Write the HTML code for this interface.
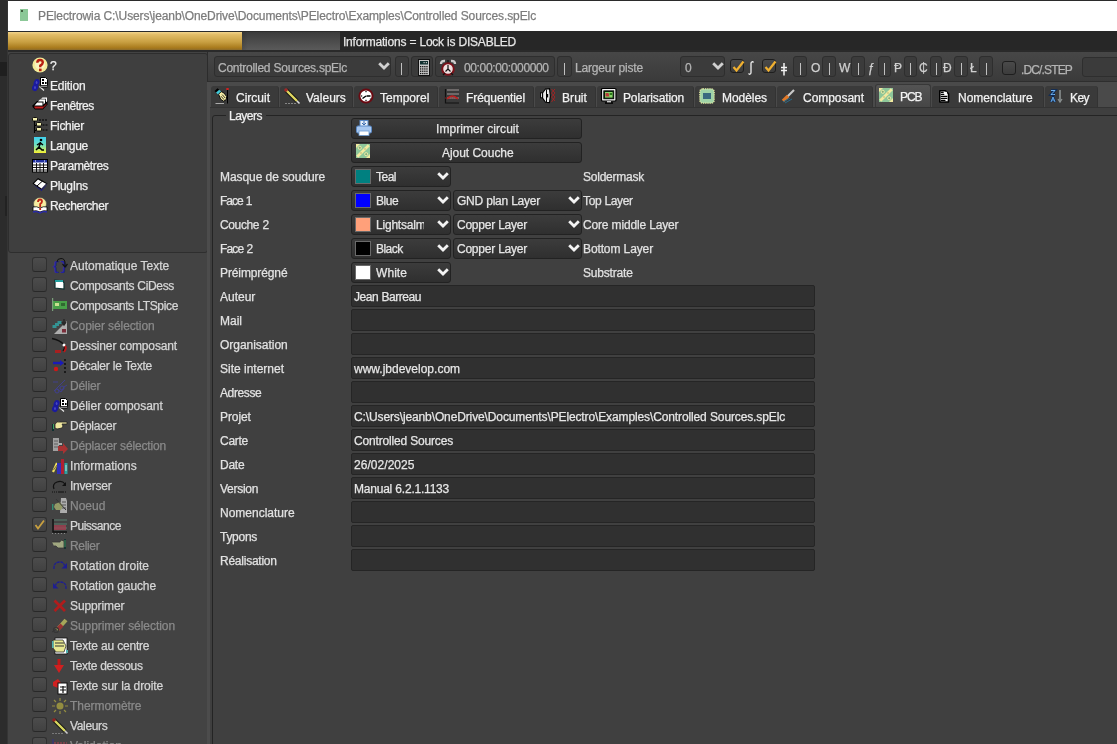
<!DOCTYPE html><html><head><meta charset="utf-8"><style>
html,body{margin:0;padding:0}
body{width:1117px;height:744px;position:relative;overflow:hidden;background:#404040;font-family:"Liberation Sans",sans-serif;font-size:12px}
div{-webkit-text-stroke:0.25px currentColor}
.t{will-change:transform}
svg{overflow:visible}
</style></head><body>
<div style="position:absolute;left:0px;top:0px;width:8px;height:744px;background:#2c2c2c"></div>
<div style="position:absolute;left:7px;top:0px;width:1px;height:744px;background:#353535"></div>
<div style="position:absolute;left:0px;top:62px;width:7px;height:14px;background:#1f1f1f"></div>
<div style="position:absolute;left:5px;top:196px;width:2px;height:20px;background:#222"></div>
<div style="position:absolute;left:8px;top:0px;width:1109px;height:1px;background:#2b2b2b"></div>
<div style="position:absolute;left:8px;top:1px;width:1109px;height:30px;background:#ffffff"></div>
<div style="position:absolute;left:8px;top:31px;width:1109px;height:1px;background:#2b2b2b"></div>
<div style="position:absolute;left:20px;top:9px;width:8px;height:12px;background:#8cc898"></div>
<div style="position:absolute;left:21px;top:10px;width:2px;height:2px;background:#406040"></div>
<div class="t" style="position:absolute;left:38px;top:9px;line-height:14px;font-size:12px;color:#7c7c7c;white-space:nowrap;letter-spacing:-0.102px;word-spacing:0.071px;">PElectrowia C:\Users\jeanb\OneDrive\Documents\PElectro\Examples\Controlled Sources.spElc</div>
<div style="position:absolute;left:8px;top:32px;width:234px;height:18px;background:linear-gradient(#f2d48c 0%,#e2bc66 15%,#c9a042 55%,#a87a1c 88%,#8c6c2a 100%)"></div>
<div style="position:absolute;left:242px;top:32px;width:98px;height:19px;background:linear-gradient(90deg,rgba(0,0,0,.12),rgba(0,0,0,0) 6px),linear-gradient(#3c3c3c,#5c5c5c)"></div>
<div style="position:absolute;left:340px;top:31px;width:777px;height:20px;background:#272727"></div>
<div class="t" style="position:absolute;left:343px;top:35px;line-height:14px;font-size:12px;color:#e6e6e6;white-space:nowrap;letter-spacing:-0.238px;word-spacing:0.166px;">Informations = Lock is DISABLED</div>
<div style="position:absolute;left:8px;top:50px;width:1109px;height:2px;background:#2a2a2a"></div>
<div style="position:absolute;left:208px;top:52px;width:909px;height:30px;background:linear-gradient(#474747,#3a3a3a)"></div>
<div style="position:absolute;left:8px;top:52px;width:200px;height:692px;background:#434343"></div>
<div style="position:absolute;left:8px;top:53px;width:198px;height:198px;border:1px solid #2e2e2e;border-radius:3px;background:#3f3f3f"></div>
<svg style="position:absolute;left:32px;top:57px;" width="16" height="17" viewBox="0 0 16 17"><circle cx="8" cy="8" r="7.6" fill="#f4eb98"/><circle cx="8" cy="7.5" r="5" fill="#faf4c0"/><path d="M5.3 5.8 Q5.3 3 8 3 Q10.8 3 10.8 5.6 Q10.8 7.2 8.3 8.6 L8.3 10.2" stroke="#b82010" stroke-width="2.4" fill="none"/><rect x="7" y="11.6" width="2.6" height="2.6" fill="#b82010"/></svg>
<div class="t" style="position:absolute;left:50px;top:59px;line-height:14px;font-size:12px;color:#f0f0f0;white-space:nowrap;">?</div>
<svg style="position:absolute;left:32px;top:77px;" width="16" height="17" viewBox="0 0 16 17"><ellipse cx="4.6" cy="5.6" rx="2.8" ry="3.6" transform="rotate(25 4.6 5.6)" fill="#1a1aa0"/><ellipse cx="3.2" cy="10.6" rx="3" ry="3.6" transform="rotate(25 3.2 10.6)" fill="#1a1aa0"/><ellipse cx="4.6" cy="5.4" rx="0.9" ry="1.5" fill="#4848c0"/><ellipse cx="3" cy="10.4" rx="0.9" ry="1.5" fill="#4848c0"/><path d="M8.5 0.5 H13.5 L15.5 2.5 V8.5 H8.5 Z" fill="#fff" stroke="#000" stroke-width="1"/><rect x="10" y="2" width="2" height="2" fill="#000"/><rect x="10" y="5" width="2" height="2" fill="#000"/><rect x="13" y="5" width="1.6" height="2" fill="#000"/><path d="M7.5 9.5 L12 13.5" stroke="#eee" stroke-width="1.2"/><path d="M8.5 10 H15.5" stroke="#000" stroke-width="1"/><path d="M9 9.2 H15" stroke="#ddd" stroke-width="0.8"/></svg>
<div class="t" style="position:absolute;left:50px;top:79px;line-height:14px;font-size:12px;color:#f0f0f0;white-space:nowrap;letter-spacing:-0.184px;">Edition</div>
<svg style="position:absolute;left:32px;top:97px;" width="16" height="17" viewBox="0 0 16 17"><path d="M0.5 8.5 L5 4 L15.5 4 L15.5 7.5 L11 12.5 L3 12.5 L0.5 10 Z" fill="#000"/><path d="M2 9.5 L11 9.5 L11 11.5 L3 11.5 Z" fill="#c42020"/><path d="M11 9.5 L14.5 6.5 L14.5 8 L11 11.5 Z" fill="#7a1010"/><path d="M2.5 8.5 L5.2 5.5 L10.5 5.5 L10.5 8.5 Z" fill="#fff"/><path d="M6 4.5 L8 2.5 L13 2.5 L13 6 L11.5 7.5 L11.5 4.5 Z" fill="#fff"/><path d="M9 1.8 L10.5 0.5 L15 0.5 L15 4.5 L14 5.2 L14 1.8 Z" fill="#fff"/></svg>
<div class="t" style="position:absolute;left:50px;top:99px;line-height:14px;font-size:12px;color:#f0f0f0;white-space:nowrap;letter-spacing:-0.430px;">Fenêtres</div>
<svg style="position:absolute;left:32px;top:117px;" width="16" height="17" viewBox="0 0 16 17"><path d="M2.5 3 V16 M2.5 8.5 H5 M2.5 13.5 H5" stroke="#000" stroke-width="1.1"/><rect x="0.5" y="0.5" width="5" height="3.5" rx="1" fill="#f4f0b0" stroke="#000" stroke-width="0.9"/><rect x="4.5" y="5.5" width="5" height="3.5" rx="1" fill="#f4f0b0" stroke="#000" stroke-width="0.9"/><rect x="4.5" y="10.5" width="5" height="3.5" rx="1" fill="#f4f0b0" stroke="#000" stroke-width="0.9"/><path d="M7 3 H15 M10.5 8 H15.5 M10.5 13 H15.5" stroke="#000" stroke-width="1" stroke-dasharray="2 1"/></svg>
<div class="t" style="position:absolute;left:50px;top:119px;line-height:14px;font-size:12px;color:#f0f0f0;white-space:nowrap;letter-spacing:-0.302px;">Fichier</div>
<svg style="position:absolute;left:32px;top:137px;" width="16" height="17" viewBox="0 0 16 17"><defs><linearGradient id="lg" x1="0" y1="0" x2="0" y2="1"><stop offset="0" stop-color="#40d0f0"/><stop offset="0.5" stop-color="#70e0c0"/><stop offset="1" stop-color="#f8f030"/></linearGradient></defs><rect x="2" y="0" width="12" height="16" fill="url(#lg)"/><circle cx="9" cy="3" r="1.3" fill="#000"/><path d="M8.5 5 L7 10 L4 13 M7 10 L10 13 L12 13 M8.5 6 L11 8 M8 6 L5 8" stroke="#000" stroke-width="1.5" fill="none"/></svg>
<div class="t" style="position:absolute;left:50px;top:139px;line-height:14px;font-size:12px;color:#f0f0f0;white-space:nowrap;letter-spacing:-0.389px;">Langue</div>
<svg style="position:absolute;left:32px;top:159px;" width="16" height="17" viewBox="0 0 16 17"><rect x="0.5" y="0.5" width="15" height="12.5" fill="#fff" stroke="#000"/><rect x="1" y="1" width="14" height="2.5" fill="#2030a0"/><rect x="3" y="1.5" width="1" height="1" fill="#fff"/><rect x="12" y="1.5" width="1" height="1" fill="#fff"/><path d="M1 6 H15 M1 8.5 H15 M1 11 H15 M4.5 4 V13 M8 4 V13 M11.5 4 V13" stroke="#000" stroke-width="0.9"/></svg>
<div class="t" style="position:absolute;left:50px;top:159px;line-height:14px;font-size:12px;color:#f0f0f0;white-space:nowrap;letter-spacing:-0.362px;">Paramètres</div>
<svg style="position:absolute;left:32px;top:177px;" width="16" height="17" viewBox="0 0 16 17"><path d="M0.5 6.5 L6 1 L15.5 6.5 L9.5 13 Z" fill="#000"/><path d="M1 7.5 L9.5 14 L15.5 7.5 L9.5 12.8 Z" fill="#1a1a90"/><path d="M2 6.5 L6 2.5 L14 6.8 L9.5 11.5 Z" fill="#fff"/><path d="M5 9 L10.5 4" stroke="#000" stroke-width="1"/><path d="M9.5 11.8 L14.5 7" stroke="#8080c0" stroke-width="0.7"/></svg>
<div class="t" style="position:absolute;left:50px;top:179px;line-height:14px;font-size:12px;color:#f0f0f0;white-space:nowrap;letter-spacing:-0.331px;">PlugIns</div>
<svg style="position:absolute;left:32px;top:197px;" width="16" height="17" viewBox="0 0 16 17"><circle cx="8" cy="7" r="6.5" fill="#f6eea0" stroke="#444" stroke-width="0.6"/><path d="M6 5 Q6 2.5 8 2.5 Q10 2.5 10 4.5 Q10 5.8 8.2 7 L8.2 10" stroke="#c02818" stroke-width="1.8" fill="none"/><path d="M1 10 Q4.5 9 8 11 Q11.5 9 15 10 L15 14 Q11.5 13 8 15 Q4.5 13 1 14 Z" fill="#fff" stroke="#000" stroke-width="0.8"/><rect x="7.3" y="11" width="1.8" height="2" fill="#c02818"/><path d="M1 15 Q4.5 14 8 16 Q11.5 14 15 15" stroke="#2a2ab0" stroke-width="1.4" fill="none"/></svg>
<div class="t" style="position:absolute;left:50px;top:199px;line-height:14px;font-size:12px;color:#f0f0f0;white-space:nowrap;letter-spacing:-0.403px;">Rechercher</div>
<div style="position:absolute;left:32px;top:257px;width:13px;height:13px;border:1px solid #303030;border-bottom-color:#282828;border-radius:3px;background:linear-gradient(#4c4c4c,#414141);"></div>
<svg style="position:absolute;left:52px;top:258px;" width="16" height="17" viewBox="0 0 16 17"><text x="0" y="12" font-family="Liberation Mono" font-size="13" font-weight="bold" fill="#2222a0">{}</text><path d="M5 4 Q5 0.5 9 0.5 Q13 0.5 13 5 L13 8" stroke="#111" stroke-width="1" fill="none"/><path d="M10.5 6 L13 9 L15.5 6" stroke="#111" stroke-width="1.2" fill="none"/></svg>
<div class="t" style="position:absolute;left:70px;top:259px;line-height:14px;font-size:12px;color:#d6d6d6;white-space:nowrap;">Automatique Texte</div>
<div style="position:absolute;left:32px;top:277px;width:13px;height:13px;border:1px solid #303030;border-bottom-color:#282828;border-radius:3px;background:linear-gradient(#4c4c4c,#414141);"></div>
<svg style="position:absolute;left:52px;top:278px;" width="16" height="17" viewBox="0 0 16 17"><path d="M3 2 L11 3 L12 5 L12 11 L3 10 Z" fill="#fff" stroke="#103030" stroke-width="1.2"/><rect x="3" y="2" width="8" height="2" fill="#20a0a0"/></svg>
<div class="t" style="position:absolute;left:70px;top:279px;line-height:14px;font-size:12px;color:#d6d6d6;white-space:nowrap;letter-spacing:-0.330px;word-spacing:0.231px;">Composants CiDess</div>
<div style="position:absolute;left:32px;top:297px;width:13px;height:13px;border:1px solid #303030;border-bottom-color:#282828;border-radius:3px;background:linear-gradient(#4c4c4c,#414141);"></div>
<svg style="position:absolute;left:52px;top:298px;" width="16" height="17" viewBox="0 0 16 17"><rect x="1" y="3" width="14" height="8" fill="#48a048"/><rect x="3" y="5" width="4" height="3" fill="#c8e090"/><rect x="9" y="5" width="4" height="3" fill="#306830"/><rect x="0" y="0" width="1.2" height="13" fill="#7aa07a"/></svg>
<div class="t" style="position:absolute;left:70px;top:299px;line-height:14px;font-size:12px;color:#d6d6d6;white-space:nowrap;letter-spacing:-0.336px;word-spacing:0.235px;">Composants LTSpice</div>
<div style="position:absolute;left:32px;top:317px;width:13px;height:13px;border:1px solid #303030;border-bottom-color:#282828;border-radius:3px;background:linear-gradient(#4c4c4c,#414141);"></div>
<svg style="position:absolute;left:52px;top:318px;opacity:.8;" width="16" height="17" viewBox="0 0 16 17"><rect x="0.5" y="7" width="4" height="3" fill="#30a8a8"/><rect x="3" y="5" width="4" height="3" fill="#30a8a8"/><rect x="5.5" y="3" width="4" height="3" fill="#30a8a8"/><path d="M2 16 L15 3 L15 16 Z" fill="#c8c8c8"/><rect x="10" y="11" width="4" height="3.5" fill="#8a2a3a"/><path d="M12 1 L12 6 M10 4 L12 7 L14 4" stroke="#222" stroke-width="1.4" fill="none"/></svg>
<div class="t" style="position:absolute;left:70px;top:319px;line-height:14px;font-size:12px;color:#8a8a8a;white-space:nowrap;letter-spacing:-0.095px;word-spacing:0.066px;">Copier sélection</div>
<div style="position:absolute;left:32px;top:337px;width:13px;height:13px;border:1px solid #303030;border-bottom-color:#282828;border-radius:3px;background:linear-gradient(#4c4c4c,#414141);"></div>
<svg style="position:absolute;left:52px;top:338px;" width="16" height="17" viewBox="0 0 16 17"><path d="M0 0.5 Q8 2 12 7 Q13.5 10 11 13" stroke="#111" stroke-width="1.3" fill="none"/><circle cx="12" cy="7" r="1.5" fill="#fff"/><path d="M13 8 Q15 10 12 14" stroke="#c01818" stroke-width="2" fill="none"/><rect x="3" y="12" width="6" height="3" fill="#c01818" opacity=".8"/></svg>
<div class="t" style="position:absolute;left:70px;top:339px;line-height:14px;font-size:12px;color:#d6d6d6;white-space:nowrap;letter-spacing:-0.137px;word-spacing:0.096px;">Dessiner composant</div>
<div style="position:absolute;left:32px;top:357px;width:13px;height:13px;border:1px solid #303030;border-bottom-color:#282828;border-radius:3px;background:linear-gradient(#4c4c4c,#414141);"></div>
<svg style="position:absolute;left:52px;top:358px;" width="16" height="17" viewBox="0 0 16 17"><path d="M1 5 L10 5" stroke="#1a1ab8" stroke-width="2.4"/><path d="M8 2 L12 5 L8 8 Z" fill="#1a1ab8"/><circle cx="4" cy="11" r="2.2" fill="#d01818"/><path d="M13 1 V15" stroke="#111" stroke-width="1.6" stroke-dasharray="2 2"/></svg>
<div class="t" style="position:absolute;left:70px;top:359px;line-height:14px;font-size:12px;color:#d6d6d6;white-space:nowrap;letter-spacing:-0.261px;word-spacing:0.183px;">Décaler le Texte</div>
<div style="position:absolute;left:32px;top:377px;width:13px;height:13px;border:1px solid #303030;border-bottom-color:#282828;border-radius:3px;background:linear-gradient(#4c4c4c,#414141);"></div>
<svg style="position:absolute;left:52px;top:378px;opacity:.8;" width="16" height="17" viewBox="0 0 16 17"><path d="M1 4 L6 4 M2 13 L9 6 L13 2 M5 11 L9 14 L12 9 L15 7" stroke="#4040a0" stroke-width="1" fill="none"/><circle cx="5" cy="13" r="2" fill="none" stroke="#4040a0"/><circle cx="10" cy="10" r="2" fill="none" stroke="#4040a0"/></svg>
<div class="t" style="position:absolute;left:70px;top:379px;line-height:14px;font-size:12px;color:#8a8a8a;white-space:nowrap;letter-spacing:-0.193px;">Délier</div>
<div style="position:absolute;left:32px;top:397px;width:13px;height:13px;border:1px solid #303030;border-bottom-color:#282828;border-radius:3px;background:linear-gradient(#4c4c4c,#414141);"></div>
<svg style="position:absolute;left:52px;top:398px;" width="16" height="17" viewBox="0 0 16 17"><ellipse cx="4.6" cy="5.6" rx="2.8" ry="3.6" transform="rotate(25 4.6 5.6)" fill="#1a1aa0"/><ellipse cx="3.2" cy="10.6" rx="3" ry="3.6" transform="rotate(25 3.2 10.6)" fill="#1a1aa0"/><ellipse cx="4.6" cy="5.4" rx="0.9" ry="1.5" fill="#4848c0"/><ellipse cx="3" cy="10.4" rx="0.9" ry="1.5" fill="#4848c0"/><path d="M8.5 0.5 H13.5 L15.5 2.5 V8.5 H8.5 Z" fill="#fff" stroke="#000" stroke-width="1"/><rect x="10" y="2" width="2" height="2" fill="#000"/><rect x="10" y="5" width="2" height="2" fill="#000"/><rect x="13" y="5" width="1.6" height="2" fill="#000"/><path d="M7.5 9.5 L12 13.5" stroke="#eee" stroke-width="1.2"/><path d="M8.5 10 H15.5" stroke="#000" stroke-width="1"/><path d="M9 9.2 H15" stroke="#ddd" stroke-width="0.8"/></svg>
<div class="t" style="position:absolute;left:70px;top:399px;line-height:14px;font-size:12px;color:#d6d6d6;white-space:nowrap;letter-spacing:-0.044px;word-spacing:0.031px;">Délier composant</div>
<div style="position:absolute;left:32px;top:417px;width:13px;height:13px;border:1px solid #303030;border-bottom-color:#282828;border-radius:3px;background:linear-gradient(#4c4c4c,#414141);"></div>
<svg style="position:absolute;left:52px;top:418px;" width="16" height="17" viewBox="0 0 16 17"><rect x="0" y="6" width="2" height="7" fill="#103030"/><rect x="1" y="6" width="1" height="5" fill="#40a060"/><path d="M3 6 Q5 3 8 4 L15 4 L15 6 L10 6 L11 8 L10 10 L5 11 L3 10 Z" fill="#f0e8a0" stroke="#222" stroke-width="0.8"/></svg>
<div class="t" style="position:absolute;left:70px;top:419px;line-height:14px;font-size:12px;color:#d6d6d6;white-space:nowrap;letter-spacing:-0.216px;">Déplacer</div>
<div style="position:absolute;left:32px;top:437px;width:13px;height:13px;border:1px solid #303030;border-bottom-color:#282828;border-radius:3px;background:linear-gradient(#4c4c4c,#414141);"></div>
<svg style="position:absolute;left:52px;top:438px;opacity:.8;" width="16" height="17" viewBox="0 0 16 17"><rect x="1" y="0" width="6" height="13" fill="#b8b8b8"/><path d="M2 3 H6 M2 6 H6 M2 9 H6" stroke="#666" stroke-width="1"/><rect x="6" y="5" width="4" height="2" fill="#c8c8c8"/><path d="M6 8 L11 8 L11 5 L16 11 L11 16 L11 13 L6 13 Z" fill="#c03030"/></svg>
<div class="t" style="position:absolute;left:70px;top:439px;line-height:14px;font-size:12px;color:#8a8a8a;white-space:nowrap;letter-spacing:-0.157px;word-spacing:0.110px;">Déplacer sélection</div>
<div style="position:absolute;left:32px;top:457px;width:13px;height:13px;border:1px solid #303030;border-bottom-color:#282828;border-radius:3px;background:linear-gradient(#4c4c4c,#414141);"></div>
<svg style="position:absolute;left:52px;top:458px;" width="16" height="17" viewBox="0 0 16 17"><path d="M1 14 L5 5" stroke="#f0e060" stroke-width="2.2"/><path d="M1.5 12 L5 7" stroke="#222" stroke-width="0.6"/><rect x="5" y="5" width="4" height="11" fill="#3030b8"/><rect x="9" y="1" width="3" height="15" fill="#b02030"/><rect x="12.5" y="5" width="3" height="11" fill="#30a0a0"/><rect x="13.5" y="7" width="1" height="6" fill="#c0e0e0"/></svg>
<div class="t" style="position:absolute;left:70px;top:459px;line-height:14px;font-size:12px;color:#d6d6d6;white-space:nowrap;letter-spacing:0.065px;">Informations</div>
<div style="position:absolute;left:32px;top:477px;width:13px;height:13px;border:1px solid #303030;border-bottom-color:#282828;border-radius:3px;background:linear-gradient(#4c4c4c,#414141);"></div>
<svg style="position:absolute;left:52px;top:478px;" width="16" height="17" viewBox="0 0 16 17"><path d="M2 11 Q0 6 5 4 Q10 2 13 6" stroke="#111" stroke-width="1.2" fill="none"/><path d="M10 8 L14 8 L14 4 Z" fill="#111"/><path d="M0 14 H15" stroke="#111" stroke-width="1.2" stroke-dasharray="1 1 1 1 1 1 6"/></svg>
<div class="t" style="position:absolute;left:70px;top:479px;line-height:14px;font-size:12px;color:#d6d6d6;white-space:nowrap;letter-spacing:-0.243px;">Inverser</div>
<div style="position:absolute;left:32px;top:497px;width:13px;height:13px;border:1px solid #303030;border-bottom-color:#282828;border-radius:3px;background:linear-gradient(#4c4c4c,#414141);"></div>
<svg style="position:absolute;left:52px;top:498px;opacity:.8;" width="16" height="17" viewBox="0 0 16 17"><path d="M9 0 L14 0 L15 3 L15 15 L8 15 Z" fill="#c8c8c8"/><path d="M10 4 H14 M10 7 H14 M10 10 H14" stroke="#555" stroke-width="1"/><path d="M3 6 L8 4 L11 8 L9 12 L4 12 L2 9 Z" fill="#a8b070"/><rect x="0" y="6" width="1.4" height="6" fill="#30a080"/><path d="M4 1 L14 12" stroke="#333" stroke-width="1"/></svg>
<div class="t" style="position:absolute;left:70px;top:499px;line-height:14px;font-size:12px;color:#8a8a8a;white-space:nowrap;">Noeud</div>
<div style="position:absolute;left:32px;top:517px;width:13px;height:13px;border:1px solid #303030;border-bottom-color:#282828;border-radius:3px;background:linear-gradient(#4c4c4c,#414141);"></div>
<svg style="position:absolute;left:33px;top:518px;" width="13" height="13" viewBox="0 0 13 13"><path d="M2.5 7 L5 10.5 L11 2.5" stroke="#c8a040" stroke-width="1.8" fill="none"/></svg>
<svg style="position:absolute;left:52px;top:518px;" width="16" height="17" viewBox="0 0 16 17"><path d="M1 1 V14 H15" stroke="#111" stroke-width="1.4" fill="none"/><path d="M2 2 H15 M2 6 H15 M2 10 H15" stroke="#5a8070" stroke-width="1"/><rect x="2" y="7" width="12" height="5" fill="#a04050" opacity=".8"/><path d="M0 15.5 H15" stroke="#888" stroke-width="1" stroke-dasharray="1 2"/></svg>
<div class="t" style="position:absolute;left:70px;top:519px;line-height:14px;font-size:12px;color:#d6d6d6;white-space:nowrap;letter-spacing:-0.507px;">Puissance</div>
<div style="position:absolute;left:32px;top:537px;width:13px;height:13px;border:1px solid #303030;border-bottom-color:#282828;border-radius:3px;background:linear-gradient(#4c4c4c,#414141);"></div>
<svg style="position:absolute;left:52px;top:538px;opacity:.8;" width="16" height="17" viewBox="0 0 16 17"><path d="M0 4 L8 4 L9 2 L12 3 L12 10 L6 10 L4 8 L2 8" fill="#b8c090" stroke="#333" stroke-width="0.8"/><rect x="12" y="1" width="2" height="10" fill="#103030"/><rect x="12.5" y="2" width="1" height="7" fill="#40a060"/></svg>
<div class="t" style="position:absolute;left:70px;top:539px;line-height:14px;font-size:12px;color:#8a8a8a;white-space:nowrap;letter-spacing:-0.343px;">Relier</div>
<div style="position:absolute;left:32px;top:557px;width:13px;height:13px;border:1px solid #303030;border-bottom-color:#282828;border-radius:3px;background:linear-gradient(#4c4c4c,#414141);"></div>
<svg style="position:absolute;left:52px;top:558px;" width="16" height="17" viewBox="0 0 16 17"><path d="M2 11 Q1.5 4 8 4 Q11.5 4 12.5 7.5" stroke="#1e1e90" stroke-width="1.3" fill="none" stroke-dasharray="3 0.6"/><path d="M9.5 10.5 L15 10.5 L15 5 Z" fill="#1e1e90"/></svg>
<div class="t" style="position:absolute;left:70px;top:559px;line-height:14px;font-size:12px;color:#d6d6d6;white-space:nowrap;letter-spacing:0.065px;">Rotation droite</div>
<div style="position:absolute;left:32px;top:577px;width:13px;height:13px;border:1px solid #303030;border-bottom-color:#282828;border-radius:3px;background:linear-gradient(#4c4c4c,#414141);"></div>
<svg style="position:absolute;left:52px;top:578px;" width="16" height="17" viewBox="0 0 16 17"><path d="M14 11 Q14.5 4 8 4 Q4.5 4 3.5 7.5" stroke="#1e1e90" stroke-width="1.3" fill="none" stroke-dasharray="3 0.6"/><path d="M6.5 10.5 L1 10.5 L1 5 Z" fill="#1e1e90"/></svg>
<div class="t" style="position:absolute;left:70px;top:579px;line-height:14px;font-size:12px;color:#d6d6d6;white-space:nowrap;letter-spacing:-0.096px;word-spacing:0.067px;">Rotation gauche</div>
<div style="position:absolute;left:32px;top:597px;width:13px;height:13px;border:1px solid #303030;border-bottom-color:#282828;border-radius:3px;background:linear-gradient(#4c4c4c,#414141);"></div>
<svg style="position:absolute;left:52px;top:598px;" width="16" height="17" viewBox="0 0 16 17"><path d="M2.5 2.5 L13 13 M13 2.5 L2.5 13" stroke="#b01c1c" stroke-width="2.8"/></svg>
<div class="t" style="position:absolute;left:70px;top:599px;line-height:14px;font-size:12px;color:#d6d6d6;white-space:nowrap;letter-spacing:-0.107px;">Supprimer</div>
<div style="position:absolute;left:32px;top:617px;width:13px;height:13px;border:1px solid #303030;border-bottom-color:#282828;border-radius:3px;background:linear-gradient(#4c4c4c,#414141);"></div>
<svg style="position:absolute;left:52px;top:618px;opacity:.8;" width="16" height="17" viewBox="0 0 16 17"><path d="M5 12 L14 2" stroke="#c0c060" stroke-width="4"/><path d="M6 11 L10 7" stroke="#b03030" stroke-width="4"/><circle cx="4" cy="12" r="2.5" fill="none" stroke="#333" stroke-width="1.2"/><path d="M0 14 L6 10" stroke="#333" stroke-width="1"/></svg>
<div class="t" style="position:absolute;left:70px;top:619px;line-height:14px;font-size:12px;color:#8a8a8a;white-space:nowrap;letter-spacing:-0.057px;word-spacing:0.040px;">Supprimer sélection</div>
<div style="position:absolute;left:32px;top:637px;width:13px;height:13px;border:1px solid #303030;border-bottom-color:#282828;border-radius:3px;background:linear-gradient(#4c4c4c,#414141);"></div>
<svg style="position:absolute;left:52px;top:638px;" width="16" height="17" viewBox="0 0 16 17"><rect x="3" y="0" width="12" height="16" fill="#fff" stroke="#111" stroke-width="0.8"/><path d="M1 2 L11 2 L14 8 L12 14 L4 14 L1 10 Z" fill="#e8e890" stroke="#333" stroke-width="0.8"/><path d="M3 5 H12 M3 8 H12" stroke="#333" stroke-width="1"/><rect x="0" y="3" width="1.6" height="7" fill="#50b0b0"/><rect x="14" y="12" width="2" height="3" fill="#50b0b0"/></svg>
<div class="t" style="position:absolute;left:70px;top:639px;line-height:14px;font-size:12px;color:#d6d6d6;white-space:nowrap;letter-spacing:-0.200px;word-spacing:0.140px;">Texte au centre</div>
<div style="position:absolute;left:32px;top:657px;width:13px;height:13px;border:1px solid #303030;border-bottom-color:#282828;border-radius:3px;background:linear-gradient(#4c4c4c,#414141);"></div>
<svg style="position:absolute;left:52px;top:658px;" width="16" height="17" viewBox="0 0 16 17"><path d="M7 1 V9" stroke="#c01818" stroke-width="3"/><path d="M2 7 L12 7 L7 15 Z" fill="#d02020"/></svg>
<div class="t" style="position:absolute;left:70px;top:659px;line-height:14px;font-size:12px;color:#d6d6d6;white-space:nowrap;letter-spacing:-0.332px;word-spacing:0.233px;">Texte dessous</div>
<div style="position:absolute;left:32px;top:677px;width:13px;height:13px;border:1px solid #303030;border-bottom-color:#282828;border-radius:3px;background:linear-gradient(#4c4c4c,#414141);"></div>
<svg style="position:absolute;left:52px;top:678px;" width="16" height="17" viewBox="0 0 16 17"><path d="M1 4 L6 1 L10 6 L6 10 L1 8 Z" fill="#d02020"/><rect x="6" y="5" width="9" height="11" fill="#fff" stroke="#111" stroke-width="1"/><path d="M8 9 H14 M8 12 H14 M11 8 V15" stroke="#111" stroke-width="1.2"/></svg>
<div class="t" style="position:absolute;left:70px;top:679px;line-height:14px;font-size:12px;color:#d6d6d6;white-space:nowrap;letter-spacing:-0.100px;word-spacing:0.070px;">Texte sur la droite</div>
<div style="position:absolute;left:32px;top:697px;width:13px;height:13px;border:1px solid #303030;border-bottom-color:#282828;border-radius:3px;background:linear-gradient(#4c4c4c,#414141);"></div>
<svg style="position:absolute;left:52px;top:698px;opacity:.8;" width="16" height="17" viewBox="0 0 16 17"><circle cx="8" cy="8" r="3.5" fill="#a8a040"/><path d="M8 0 V3 M8 13 V16 M0 8 H3 M13 8 H16 M2 2 L4 4 M12 12 L14 14 M14 2 L12 4 M2 14 L4 12" stroke="#a8a040" stroke-width="1.2"/></svg>
<div class="t" style="position:absolute;left:70px;top:699px;line-height:14px;font-size:12px;color:#8a8a8a;white-space:nowrap;letter-spacing:-0.056px;">Thermomètre</div>
<div style="position:absolute;left:32px;top:717px;width:13px;height:13px;border:1px solid #303030;border-bottom-color:#282828;border-radius:3px;background:linear-gradient(#4c4c4c,#414141);"></div>
<svg style="position:absolute;left:52px;top:718px;" width="16" height="17" viewBox="0 0 16 17"><path d="M2 2 L13 13" stroke="#111" stroke-width="4"/><path d="M2 2 L13 13" stroke="#d8d860" stroke-width="2.4"/><circle cx="2" cy="2" r="1.8" fill="#902020"/><path d="M13 13 L15.5 15.5" stroke="#ccc" stroke-width="1.6"/><path d="M0 15.5 H12" stroke="#888" stroke-width="0.8" stroke-dasharray="2 1"/></svg>
<div class="t" style="position:absolute;left:70px;top:719px;line-height:14px;font-size:12px;color:#d6d6d6;white-space:nowrap;letter-spacing:-0.342px;">Valeurs</div>
<div style="position:absolute;left:32px;top:737px;width:13px;height:13px;border:1px solid #303030;border-bottom-color:#282828;border-radius:3px;background:linear-gradient(#4c4c4c,#414141);"></div>
<svg style="position:absolute;left:52px;top:738px;opacity:.8;" width="16" height="17" viewBox="0 0 16 17"><path d="M1 1 V16" stroke="#3030a0" stroke-width="1"/><path d="M2 5 H15" stroke="#a04050" stroke-width="1.5" stroke-dasharray="2 1"/></svg>
<div class="t" style="position:absolute;left:70px;top:739px;line-height:14px;font-size:12px;color:#8a8a8a;white-space:nowrap;">Validation</div>
<div style="position:absolute;left:207px;top:52px;width:1px;height:30px;background:#2c2c2c"></div>
<div style="position:absolute;left:208px;top:81px;width:909px;height:663px;background:#404040"></div>
<div style="position:absolute;left:208px;top:81px;width:909px;height:1px;background:#2e2e2e"></div>
<div style="position:absolute;left:207px;top:82px;width:3px;height:662px;background:#4c4c4c"></div>
<div style="position:absolute;left:210px;top:82px;width:907px;height:4px;background:#4a4a4a"></div>
<div style="position:absolute;left:210px;top:86px;width:907px;height:21px;background:#4a4a4a"></div>
<div style="position:absolute;left:211px;top:86px;width:67px;height:21px;background:#3a3a3a;border-right:1px solid #333;border-radius:3px 3px 0 0"></div>
<svg style="position:absolute;left:214px;top:88px;" width="16" height="17" viewBox="0 0 16 17"><path d="M0.5 3 L3.5 0.3 L6.2 2.6 L3.2 5.6 Z" fill="#000"/><path d="M2 4.6 L5.2 1.8 L7.4 3.8 L4.3 6.7 Z" fill="#40c8d8"/><path d="M4.6 6.2 L7.2 3.6 L10 5 L12.6 8.6 L12.2 11.6 L9.6 13.2 L6.6 11.2 Z" fill="#f8f0a8" stroke="#000" stroke-width="0.9"/><path d="M8.2 6.6 L11.2 10 M7 8.2 L10 11.6" stroke="#000" stroke-width="0.8"/><path d="M13.5 1.5 V15.5" stroke="#000" stroke-width="1"/><rect x="12.3" y="0" width="2.4" height="2" fill="#d02020"/><path d="M1.5 15.5 H10" stroke="#aaa" stroke-width="1"/></svg>
<div class="t" style="position:absolute;left:236px;top:91px;line-height:14px;font-size:12px;color:#f2f2f2;white-space:nowrap;">Circuit</div>
<div style="position:absolute;left:280px;top:86px;width:72px;height:21px;background:#3a3a3a;border-right:1px solid #333;border-radius:3px 3px 0 0"></div>
<svg style="position:absolute;left:284px;top:88px;" width="16" height="17" viewBox="0 0 16 17"><path d="M2 2 L13 13" stroke="#111" stroke-width="4"/><path d="M2 2 L13 13" stroke="#e0d860" stroke-width="2.4"/><circle cx="2" cy="2" r="1.8" fill="#a02828"/><path d="M13 13 L15.5 15.5" stroke="#ddd" stroke-width="1.6"/><path d="M1 15.5 H12" stroke="#999" stroke-width="0.8" stroke-dasharray="2 1"/></svg>
<div class="t" style="position:absolute;left:306px;top:91px;line-height:14px;font-size:12px;color:#f2f2f2;white-space:nowrap;">Valeurs</div>
<div style="position:absolute;left:354px;top:86px;width:83px;height:21px;background:#3a3a3a;border-right:1px solid #333;border-radius:3px 3px 0 0"></div>
<svg style="position:absolute;left:358px;top:88px;" width="16" height="17" viewBox="0 0 16 17"><circle cx="8" cy="8" r="6.6" fill="#fff" stroke="#6a0a12" stroke-width="2"/><path d="M8.5 8 H12.5 M8 8 L4.5 10.5" stroke="#000" stroke-width="1.5"/><rect x="7.4" y="3" width="1.2" height="1.2" fill="#000"/><rect x="7.4" y="11.8" width="1.2" height="1.2" fill="#000"/><rect x="3" y="7.4" width="1.2" height="1.2" fill="#000"/><rect x="11.8" y="10.5" width="1" height="1" fill="#000"/></svg>
<div class="t" style="position:absolute;left:380px;top:91px;line-height:14px;font-size:12px;color:#f2f2f2;white-space:nowrap;">Temporel</div>
<div style="position:absolute;left:439px;top:86px;width:94px;height:21px;background:#3a3a3a;border-right:1px solid #333;border-radius:3px 3px 0 0"></div>
<svg style="position:absolute;left:444px;top:88px;" width="16" height="17" viewBox="0 0 16 17"><path d="M1.5 1 V15 H15" stroke="#111" stroke-width="1.2" fill="none"/><path d="M3 2 H15 M3 6 H15 M3 10 H15" stroke="#a09898" stroke-width="1"/><path d="M3 11 Q8 5 14 11" stroke="#c02020" stroke-width="1.3" fill="none"/><path d="M1 10 H15" stroke="#c02020" stroke-width="0.8" stroke-dasharray="1 1"/></svg>
<div class="t" style="position:absolute;left:466px;top:91px;line-height:14px;font-size:12px;color:#f2f2f2;white-space:nowrap;letter-spacing:-0.094px;">Fréquentiel</div>
<div style="position:absolute;left:535px;top:86px;width:60px;height:21px;background:#3a3a3a;border-right:1px solid #333;border-radius:3px 3px 0 0"></div>
<svg style="position:absolute;left:540px;top:88px;" width="16" height="17" viewBox="0 0 16 17"><rect x="0.6" y="4.8" width="2" height="5" fill="#e8e8e8" stroke="#000" stroke-width="1"/><path d="M2.6 5 L5.5 1 L9.5 0.6 Q11 7.5 9.5 14.6 L5.5 14.2 L2.6 10 Z" fill="#eaeaea" stroke="#000" stroke-width="1.1"/><path d="M6.5 1.5 V14" stroke="#000" stroke-width="1"/><rect x="6.8" y="6" width="1.4" height="3.4" fill="#000"/><path d="M11.5 1 L15 5 L11.5 9 L15 13 M15 1 L11.5 5 L15 9 L11.5 14" stroke="#b02020" stroke-width="1" fill="none" opacity=".85"/></svg>
<div class="t" style="position:absolute;left:562px;top:91px;line-height:14px;font-size:12px;color:#f2f2f2;white-space:nowrap;letter-spacing:0.066px;">Bruit</div>
<div style="position:absolute;left:597px;top:86px;width:96px;height:21px;background:#3a3a3a;border-right:1px solid #333;border-radius:3px 3px 0 0"></div>
<svg style="position:absolute;left:601px;top:88px;" width="16" height="17" viewBox="0 0 16 17"><rect x="0.5" y="0.5" width="14.5" height="12.5" rx="1" fill="#f4f4f4" stroke="#000" stroke-width="1.2"/><rect x="2.8" y="2.8" width="10" height="8" fill="#062a06" stroke="#000" stroke-width="0.8"/><rect x="4" y="4" width="7.6" height="5.6" fill="#8ad46a"/><path d="M4.5 5 L7.5 5 L8.5 8.5 L4.5 8.5 Z" fill="#b83a3a"/><rect x="8.6" y="5" width="2.4" height="2" fill="#2a7a1a"/><path d="M4 15 H12" stroke="#000" stroke-width="1.6"/><rect x="6" y="13" width="4" height="1.4" fill="#c8c8c8"/></svg>
<div class="t" style="position:absolute;left:623px;top:91px;line-height:14px;font-size:12px;color:#f2f2f2;white-space:nowrap;letter-spacing:-0.142px;">Polarisation</div>
<div style="position:absolute;left:695px;top:86px;width:80px;height:21px;background:#3a3a3a;border-right:1px solid #333;border-radius:3px 3px 0 0"></div>
<svg style="position:absolute;left:699px;top:88px;" width="16" height="17" viewBox="0 0 16 17"><rect x="0.8" y="0.8" width="14.4" height="14.4" rx="3" fill="#a0d4a8" stroke="#e8e8a0" stroke-width="1.2" stroke-dasharray="1.2 1"/><rect x="4" y="5" width="8" height="6" fill="#3a6a80"/></svg>
<div class="t" style="position:absolute;left:722px;top:91px;line-height:14px;font-size:12px;color:#f2f2f2;white-space:nowrap;letter-spacing:-0.051px;">Modèles</div>
<div style="position:absolute;left:777px;top:86px;width:95px;height:21px;background:#3a3a3a;border-right:1px solid #333;border-radius:3px 3px 0 0"></div>
<svg style="position:absolute;left:781px;top:88px;" width="16" height="17" viewBox="0 0 16 17"><path d="M6 9 L13 2" stroke="#c8c8c8" stroke-width="2.2"/><path d="M2 13 L7 8" stroke="#e07828" stroke-width="3.4"/><path d="M2 14 L9 10 M4 15 L11 11" stroke="#2a6a8a" stroke-width="1"/></svg>
<div class="t" style="position:absolute;left:803px;top:91px;line-height:14px;font-size:12px;color:#f2f2f2;white-space:nowrap;letter-spacing:-0.040px;">Composant</div>
<div style="position:absolute;left:875px;top:84px;width:54px;height:23px;border:1px solid #383838;border-bottom:0;background:linear-gradient(#535353,#464646);border-radius:3px 3px 0 0"></div>
<svg style="position:absolute;left:879px;top:88px;" width="16" height="17" viewBox="0 0 16 17"><rect x="0" y="0" width="14" height="14" fill="#8ec79a"/><path d="M1.2 12.8 L12.8 1.2" stroke="#f2eaa0" stroke-width="2.8"/><path d="M0 0 H4 L0 4 Z M14 14 H10 L14 10 Z" fill="#f2eaa0"/><circle cx="3.8" cy="3.8" r="1.6" fill="none" stroke="#f2eaa0" stroke-width="0.9"/><circle cx="10.2" cy="10.2" r="1.6" fill="none" stroke="#f2eaa0" stroke-width="0.9"/><rect x="4.5" y="8.5" width="1" height="1" fill="#8a8a50"/><rect x="8.5" y="4.5" width="1" height="1" fill="#8a8a50"/><rect x="3.3" y="3.3" width="1" height="1" fill="#8a8a50"/><rect x="9.7" y="9.7" width="1" height="1" fill="#8a8a50"/></svg>
<div class="t" style="position:absolute;left:900px;top:90px;line-height:14px;font-size:12px;color:#f2f2f2;white-space:nowrap;letter-spacing:-1.057px;">PCB</div>
<div style="position:absolute;left:932px;top:86px;width:111px;height:21px;background:#3a3a3a;border-right:1px solid #333;border-radius:3px 3px 0 0"></div>
<svg style="position:absolute;left:939px;top:90px;" width="16" height="17" viewBox="0 0 16 17"><path d="M0.8 0.8 H6.5 L9.5 3.8 V12 H0.8 Z" fill="#fff" stroke="#000" stroke-width="1.6" stroke-linejoin="round"/><circle cx="7.2" cy="2.6" r="0.8" fill="#fff"/><path d="M2.3 2.4 H4.2 M2.3 4.4 H4.8 M2.3 6.4 H7.8 M2.3 8.4 H7.8 M2.3 10.4 H6" stroke="#000" stroke-width="1.1" stroke-linecap="round"/></svg>
<div class="t" style="position:absolute;left:958px;top:91px;line-height:14px;font-size:12px;color:#f2f2f2;white-space:nowrap;">Nomenclature</div>
<div style="position:absolute;left:1045px;top:86px;width:52px;height:21px;background:#3a3a3a;border-right:1px solid #333;border-radius:3px 3px 0 0"></div>
<svg style="position:absolute;left:1050px;top:88px;" width="16" height="17" viewBox="0 0 16 17"><path d="M1 2.5 H5 L1 6.5 H5" stroke="#0a2a5a" stroke-width="2.4" fill="none"/><path d="M1 2.5 H5 L1 6.5 H5" stroke="#70b4f0" stroke-width="1" fill="none"/><path d="M1 14 L3 9 L5 14 M1.8 12 H4.2" stroke="#0a2a5a" stroke-width="2.2" fill="none"/><path d="M1 14 L3 9 L5 14 M1.8 12 H4.2" stroke="#70b4f0" stroke-width="0.9" fill="none"/><path d="M10 2 V13" stroke="#8a9090" stroke-width="1.6"/><path d="M8 11 L10 14 L12 11" stroke="#8a9090" stroke-width="1.3" fill="none"/></svg>
<div class="t" style="position:absolute;left:1070px;top:91px;line-height:14px;font-size:12px;color:#f2f2f2;white-space:nowrap;letter-spacing:-0.557px;">Key</div>
<div style="position:absolute;left:210px;top:107px;width:907px;height:1px;background:#333333"></div>
<div style="position:absolute;left:210px;top:108px;width:907px;height:636px;background:#3f3f3f"></div>
<div style="position:absolute;left:212px;top:115px;width:1000px;height:700px;border:1px solid #242424;border-radius:3px;background:#404040"></div>
<div style="position:absolute;left:226px;top:110px;width:40px;height:8px;background:#3f3f3f"></div>
<div class="t" style="position:absolute;left:229px;top:109px;line-height:14px;font-size:12px;color:#f0f0f0;white-space:nowrap;letter-spacing:-0.503px;">Layers</div>
<div style="position:absolute;left:351px;top:118px;width:229px;height:19px;border:1px solid #222;border-radius:3px;background:linear-gradient(#3c3c3c,#2f2f2f)"></div>
<svg style="position:absolute;left:356px;top:120px;" width="16" height="17" viewBox="0 0 16 17"><rect x="4" y="0.5" width="8" height="7" fill="#e8f0f8" stroke="#5a8ac8" stroke-width="1"/><path d="M8 1 V5 M6 3 L8 5 L10 3" stroke="#3a6ab0" stroke-width="1" fill="none"/><rect x="0.5" y="6" width="15" height="7" rx="1.5" fill="#a8c8f0" stroke="#5a8ac8"/><rect x="3" y="11" width="10" height="4.5" fill="#fff" stroke="#6a9ad0" stroke-width="0.8"/></svg>
<div class="t" style="position:absolute;left:436px;top:122px;line-height:14px;font-size:12px;color:#e6e6e6;white-space:nowrap;letter-spacing:0.062px;">Imprimer circuit</div>
<div style="position:absolute;left:351px;top:142px;width:229px;height:19px;border:1px solid #222;border-radius:3px;background:linear-gradient(#3c3c3c,#2f2f2f)"></div>
<svg style="position:absolute;left:356px;top:144px;" width="16" height="17" viewBox="0 0 16 17"><rect x="0" y="0" width="14" height="14" fill="#8ec79a"/><path d="M1.2 12.8 L12.8 1.2" stroke="#f2eaa0" stroke-width="2.8"/><path d="M0 0 H4 L0 4 Z M14 14 H10 L14 10 Z" fill="#f2eaa0"/><circle cx="3.8" cy="3.8" r="1.6" fill="none" stroke="#f2eaa0" stroke-width="0.9"/><circle cx="10.2" cy="10.2" r="1.6" fill="none" stroke="#f2eaa0" stroke-width="0.9"/><rect x="4.5" y="8.5" width="1" height="1" fill="#8a8a50"/><rect x="8.5" y="4.5" width="1" height="1" fill="#8a8a50"/><rect x="3.3" y="3.3" width="1" height="1" fill="#8a8a50"/><rect x="9.7" y="9.7" width="1" height="1" fill="#8a8a50"/></svg>
<div class="t" style="position:absolute;left:442px;top:146px;line-height:14px;font-size:12px;color:#e6e6e6;white-space:nowrap;letter-spacing:-0.038px;word-spacing:0.027px;">Ajout Couche</div>
<div class="t" style="position:absolute;left:220px;top:170px;line-height:14px;font-size:12px;color:#e2e2e2;white-space:nowrap;letter-spacing:-0.067px;word-spacing:0.047px;">Masque de soudure</div>
<div class="t" style="position:absolute;left:220px;top:194px;line-height:14px;font-size:12px;color:#e2e2e2;white-space:nowrap;letter-spacing:-0.995px;word-spacing:0.696px;">Face 1</div>
<div class="t" style="position:absolute;left:220px;top:218px;line-height:14px;font-size:12px;color:#e2e2e2;white-space:nowrap;letter-spacing:-0.364px;word-spacing:0.255px;">Couche 2</div>
<div class="t" style="position:absolute;left:220px;top:242px;line-height:14px;font-size:12px;color:#e2e2e2;white-space:nowrap;letter-spacing:-0.825px;word-spacing:0.577px;">Face 2</div>
<div class="t" style="position:absolute;left:220px;top:266px;line-height:14px;font-size:12px;color:#e2e2e2;white-space:nowrap;letter-spacing:-0.109px;">Préimprégné</div>
<div class="t" style="position:absolute;left:220px;top:290px;line-height:14px;font-size:12px;color:#e2e2e2;white-space:nowrap;">Auteur</div>
<div class="t" style="position:absolute;left:220px;top:314px;line-height:14px;font-size:12px;color:#e2e2e2;white-space:nowrap;">Mail</div>
<div class="t" style="position:absolute;left:220px;top:338px;line-height:14px;font-size:12px;color:#e2e2e2;white-space:nowrap;letter-spacing:-0.028px;">Organisation</div>
<div class="t" style="position:absolute;left:220px;top:362px;line-height:14px;font-size:12px;color:#e2e2e2;white-space:nowrap;">Site internet</div>
<div class="t" style="position:absolute;left:220px;top:386px;line-height:14px;font-size:12px;color:#e2e2e2;white-space:nowrap;letter-spacing:-0.388px;">Adresse</div>
<div class="t" style="position:absolute;left:220px;top:410px;line-height:14px;font-size:12px;color:#e2e2e2;white-space:nowrap;letter-spacing:-0.091px;">Projet</div>
<div class="t" style="position:absolute;left:220px;top:434px;line-height:14px;font-size:12px;color:#e2e2e2;white-space:nowrap;letter-spacing:-0.289px;">Carte</div>
<div class="t" style="position:absolute;left:220px;top:458px;line-height:14px;font-size:12px;color:#e2e2e2;white-space:nowrap;letter-spacing:-0.236px;">Date</div>
<div class="t" style="position:absolute;left:220px;top:482px;line-height:14px;font-size:12px;color:#e2e2e2;white-space:nowrap;letter-spacing:-0.276px;">Version</div>
<div class="t" style="position:absolute;left:220px;top:506px;line-height:14px;font-size:12px;color:#e2e2e2;white-space:nowrap;">Nomenclature</div>
<div class="t" style="position:absolute;left:220px;top:530px;line-height:14px;font-size:12px;color:#e2e2e2;white-space:nowrap;letter-spacing:-0.281px;">Typons</div>
<div class="t" style="position:absolute;left:220px;top:554px;line-height:14px;font-size:12px;color:#e2e2e2;white-space:nowrap;letter-spacing:-0.243px;">Réalisation</div>
<div style="position:absolute;left:351px;top:166px;width:98px;height:19px;border:1px solid #222;border-radius:3px;background:linear-gradient(#3c3c3c,#2f2f2f)"></div>
<div style="position:absolute;left:355px;top:169px;width:14px;height:13px;background:#008080;border:1px solid #6a6a6a;box-sizing:border-box;width:16px;height:15px"></div>
<div class="t" style="position:absolute;left:376px;top:170px;line-height:14px;font-size:12px;color:#e6e6e6;white-space:nowrap;letter-spacing:-0.504px;overflow:hidden;width:48px">Teal</div>
<svg style="position:absolute;left:438px;top:173px;" width="10" height="7" viewBox="0 0 10 7"><path d="M1.2 1.2 L5 5 L8.8 1.2" stroke="#f4f4f4" stroke-width="2.8" fill="none" stroke-linecap="square"/></svg>
<div style="position:absolute;left:351px;top:190px;width:98px;height:19px;border:1px solid #222;border-radius:3px;background:linear-gradient(#3c3c3c,#2f2f2f)"></div>
<div style="position:absolute;left:355px;top:193px;width:14px;height:13px;background:#0000ff;border:1px solid #6a6a6a;box-sizing:border-box;width:16px;height:15px"></div>
<div class="t" style="position:absolute;left:376px;top:194px;line-height:14px;font-size:12px;color:#e6e6e6;white-space:nowrap;letter-spacing:-0.429px;overflow:hidden;width:48px">Blue</div>
<svg style="position:absolute;left:438px;top:197px;" width="10" height="7" viewBox="0 0 10 7"><path d="M1.2 1.2 L5 5 L8.8 1.2" stroke="#f4f4f4" stroke-width="2.8" fill="none" stroke-linecap="square"/></svg>
<div style="position:absolute;left:351px;top:214px;width:98px;height:19px;border:1px solid #222;border-radius:3px;background:linear-gradient(#3c3c3c,#2f2f2f)"></div>
<div style="position:absolute;left:355px;top:217px;width:14px;height:13px;background:#ffa07a;border:1px solid #6a6a6a;box-sizing:border-box;width:16px;height:15px"></div>
<div class="t" style="position:absolute;left:376px;top:218px;line-height:14px;font-size:12px;color:#e6e6e6;white-space:nowrap;letter-spacing:-0.207px;overflow:hidden;width:48px">Lightsalm</div>
<svg style="position:absolute;left:438px;top:221px;" width="10" height="7" viewBox="0 0 10 7"><path d="M1.2 1.2 L5 5 L8.8 1.2" stroke="#f4f4f4" stroke-width="2.8" fill="none" stroke-linecap="square"/></svg>
<div style="position:absolute;left:351px;top:238px;width:98px;height:19px;border:1px solid #222;border-radius:3px;background:linear-gradient(#3c3c3c,#2f2f2f)"></div>
<div style="position:absolute;left:355px;top:241px;width:14px;height:13px;background:#000000;border:1px solid #6a6a6a;box-sizing:border-box;width:16px;height:15px"></div>
<div class="t" style="position:absolute;left:376px;top:242px;line-height:14px;font-size:12px;color:#e6e6e6;white-space:nowrap;letter-spacing:-0.529px;overflow:hidden;width:48px">Black</div>
<svg style="position:absolute;left:438px;top:245px;" width="10" height="7" viewBox="0 0 10 7"><path d="M1.2 1.2 L5 5 L8.8 1.2" stroke="#f4f4f4" stroke-width="2.8" fill="none" stroke-linecap="square"/></svg>
<div style="position:absolute;left:351px;top:262px;width:98px;height:19px;border:1px solid #222;border-radius:3px;background:linear-gradient(#3c3c3c,#2f2f2f)"></div>
<div style="position:absolute;left:355px;top:265px;width:14px;height:13px;background:#ffffff;border:1px solid #6a6a6a;box-sizing:border-box;width:16px;height:15px"></div>
<div class="t" style="position:absolute;left:376px;top:266px;line-height:14px;font-size:12px;color:#e6e6e6;white-space:nowrap;letter-spacing:0.066px;overflow:hidden;width:48px">White</div>
<svg style="position:absolute;left:438px;top:269px;" width="10" height="7" viewBox="0 0 10 7"><path d="M1.2 1.2 L5 5 L8.8 1.2" stroke="#f4f4f4" stroke-width="2.8" fill="none" stroke-linecap="square"/></svg>
<div style="position:absolute;left:453px;top:190px;width:127px;height:19px;border:1px solid #222;border-radius:3px;background:linear-gradient(#3c3c3c,#2f2f2f)"></div>
<div class="t" style="position:absolute;left:457px;top:194px;line-height:14px;font-size:12px;color:#e6e6e6;white-space:nowrap;letter-spacing:-0.241px;word-spacing:0.168px;overflow:hidden;width:109px">GND plan Layer</div>
<svg style="position:absolute;left:569px;top:197px;" width="10" height="7" viewBox="0 0 10 7"><path d="M1.2 1.2 L5 5 L8.8 1.2" stroke="#f4f4f4" stroke-width="2.8" fill="none" stroke-linecap="square"/></svg>
<div style="position:absolute;left:453px;top:214px;width:127px;height:19px;border:1px solid #222;border-radius:3px;background:linear-gradient(#3c3c3c,#2f2f2f)"></div>
<div class="t" style="position:absolute;left:457px;top:218px;line-height:14px;font-size:12px;color:#e6e6e6;white-space:nowrap;letter-spacing:-0.239px;word-spacing:0.167px;overflow:hidden;width:109px">Copper Layer</div>
<svg style="position:absolute;left:569px;top:221px;" width="10" height="7" viewBox="0 0 10 7"><path d="M1.2 1.2 L5 5 L8.8 1.2" stroke="#f4f4f4" stroke-width="2.8" fill="none" stroke-linecap="square"/></svg>
<div style="position:absolute;left:453px;top:238px;width:127px;height:19px;border:1px solid #222;border-radius:3px;background:linear-gradient(#3c3c3c,#2f2f2f)"></div>
<div class="t" style="position:absolute;left:457px;top:242px;line-height:14px;font-size:12px;color:#e6e6e6;white-space:nowrap;letter-spacing:-0.239px;word-spacing:0.167px;overflow:hidden;width:109px">Copper Layer</div>
<svg style="position:absolute;left:569px;top:245px;" width="10" height="7" viewBox="0 0 10 7"><path d="M1.2 1.2 L5 5 L8.8 1.2" stroke="#f4f4f4" stroke-width="2.8" fill="none" stroke-linecap="square"/></svg>
<div class="t" style="position:absolute;left:583px;top:170px;line-height:14px;font-size:12px;color:#e2e2e2;white-space:nowrap;letter-spacing:-0.236px;">Soldermask</div>
<div class="t" style="position:absolute;left:583px;top:194px;line-height:14px;font-size:12px;color:#e2e2e2;white-space:nowrap;letter-spacing:-0.372px;word-spacing:0.260px;">Top Layer</div>
<div class="t" style="position:absolute;left:583px;top:218px;line-height:14px;font-size:12px;color:#e2e2e2;white-space:nowrap;letter-spacing:-0.170px;word-spacing:0.119px;">Core middle Layer</div>
<div class="t" style="position:absolute;left:583px;top:242px;line-height:14px;font-size:12px;color:#e2e2e2;white-space:nowrap;letter-spacing:-0.119px;word-spacing:0.083px;">Bottom Layer</div>
<div class="t" style="position:absolute;left:583px;top:266px;line-height:14px;font-size:12px;color:#e2e2e2;white-space:nowrap;letter-spacing:-0.194px;">Substrate</div>
<div style="position:absolute;left:351px;top:285px;width:462px;height:20px;border:1px solid #252525;border-radius:2px;background:#303030"></div>
<div class="t" style="position:absolute;left:354px;top:290px;line-height:14px;font-size:12px;color:#e6e6e6;white-space:nowrap;letter-spacing:-0.445px;word-spacing:0.312px;">Jean Barreau</div>
<div style="position:absolute;left:351px;top:309px;width:462px;height:20px;border:1px solid #252525;border-radius:2px;background:#303030"></div>
<div style="position:absolute;left:351px;top:333px;width:462px;height:20px;border:1px solid #252525;border-radius:2px;background:#303030"></div>
<div style="position:absolute;left:351px;top:357px;width:462px;height:20px;border:1px solid #252525;border-radius:2px;background:#303030"></div>
<div class="t" style="position:absolute;left:354px;top:362px;line-height:14px;font-size:12px;color:#e6e6e6;white-space:nowrap;">www.jbdevelop.com</div>
<div style="position:absolute;left:351px;top:381px;width:462px;height:20px;border:1px solid #252525;border-radius:2px;background:#303030"></div>
<div style="position:absolute;left:351px;top:405px;width:462px;height:20px;border:1px solid #252525;border-radius:2px;background:#303030"></div>
<div class="t" style="position:absolute;left:354px;top:410px;line-height:14px;font-size:12px;color:#e6e6e6;white-space:nowrap;letter-spacing:-0.121px;word-spacing:0.085px;">C:\Users\jeanb\OneDrive\Documents\PElectro\Examples\Controlled Sources.spElc</div>
<div style="position:absolute;left:351px;top:429px;width:462px;height:20px;border:1px solid #252525;border-radius:2px;background:#303030"></div>
<div class="t" style="position:absolute;left:354px;top:434px;line-height:14px;font-size:12px;color:#e6e6e6;white-space:nowrap;letter-spacing:-0.176px;word-spacing:0.123px;">Controlled Sources</div>
<div style="position:absolute;left:351px;top:453px;width:462px;height:20px;border:1px solid #252525;border-radius:2px;background:#303030"></div>
<div class="t" style="position:absolute;left:354px;top:458px;line-height:14px;font-size:12px;color:#e6e6e6;white-space:nowrap;letter-spacing:0.047px;">26/02/2025</div>
<div style="position:absolute;left:351px;top:477px;width:462px;height:20px;border:1px solid #252525;border-radius:2px;background:#303030"></div>
<div class="t" style="position:absolute;left:354px;top:482px;line-height:14px;font-size:12px;color:#e6e6e6;white-space:nowrap;letter-spacing:-0.214px;word-spacing:0.150px;">Manual 6.2.1.1133</div>
<div style="position:absolute;left:351px;top:501px;width:462px;height:20px;border:1px solid #252525;border-radius:2px;background:#303030"></div>
<div style="position:absolute;left:351px;top:525px;width:462px;height:20px;border:1px solid #252525;border-radius:2px;background:#303030"></div>
<div style="position:absolute;left:351px;top:549px;width:462px;height:20px;border:1px solid #252525;border-radius:2px;background:#303030"></div>
<div style="position:absolute;left:214px;top:56px;width:175px;height:19px;border:1px solid #2e2e2e;border-radius:3px;background:#3b3b3b"></div>
<div class="t" style="position:absolute;left:218px;top:61px;line-height:14px;font-size:12px;color:#b4b4b4;white-space:nowrap;letter-spacing:-0.245px;word-spacing:0.172px;">Controlled Sources.spElc</div>
<svg style="position:absolute;left:379px;top:63px;" width="10" height="7" viewBox="0 0 10 7"><path d="M1.2 1.2 L5 5 L8.8 1.2" stroke="#d0d0d0" stroke-width="2.8" fill="none" stroke-linecap="square"/></svg>
<div style="position:absolute;left:395px;top:56px;width:12px;height:19px;border:1px solid #2e2e2e;border-radius:3px;background:#3b3b3b"></div>
<div style="position:absolute;left:401px;top:63px;width:1px;height:12px;background:#c0c0c0"></div>
<div style="position:absolute;left:411px;top:56px;width:20px;height:19px;border:1px solid #2e2e2e;border-radius:3px;background:#3b3b3b"></div>
<svg style="position:absolute;left:418px;top:59px;" width="16" height="17" viewBox="0 0 16 17"><rect x="0.5" y="0.5" width="11" height="16" fill="#c8c8c8" stroke="#111"/><rect x="2" y="2" width="8" height="3.5" fill="#103030"/><rect x="5.5" y="3" width="1.2" height="1.2" fill="#c0c0c0"/><rect x="7.8" y="3" width="1.2" height="1.2" fill="#c0c0c0"/><rect x="2.0" y="7.0" width="1.3" height="1.3" fill="#111"/><rect x="4.1" y="7.0" width="1.3" height="1.3" fill="#111"/><rect x="6.2" y="7.0" width="1.3" height="1.3" fill="#111"/><rect x="8.3" y="7.0" width="1.3" height="1.3" fill="#111"/><rect x="2.0" y="9.3" width="1.3" height="1.3" fill="#111"/><rect x="4.1" y="9.3" width="1.3" height="1.3" fill="#111"/><rect x="6.2" y="9.3" width="1.3" height="1.3" fill="#111"/><rect x="8.3" y="9.3" width="1.3" height="1.3" fill="#111"/><rect x="2.0" y="11.6" width="1.3" height="1.3" fill="#111"/><rect x="4.1" y="11.6" width="1.3" height="1.3" fill="#111"/><rect x="6.2" y="11.6" width="1.3" height="1.3" fill="#111"/><rect x="8.3" y="11.6" width="1.3" height="1.3" fill="#111"/><rect x="2.0" y="13.9" width="1.3" height="1.3" fill="#111"/><rect x="4.1" y="13.9" width="1.3" height="1.3" fill="#111"/><rect x="6.2" y="13.9" width="1.3" height="1.3" fill="#111"/><rect x="8.3" y="13.9" width="1.3" height="1.3" fill="#111"/></svg>
<div style="position:absolute;left:435px;top:56px;width:118px;height:19px;border:1px solid #2e2e2e;border-radius:3px;background:#3b3b3b"></div>
<svg style="position:absolute;left:440px;top:60px;" width="16" height="17" viewBox="0 0 16 17"><path d="M1 4 Q1 0.5 5 1 M15 4 Q15 0.5 11 1" stroke="#ccc" stroke-width="2.4" fill="none"/><path d="M8 0 V3" stroke="#111" stroke-width="1.2"/><circle cx="8" cy="9" r="5.8" fill="#f0e0e0" stroke="#7a1018" stroke-width="2"/><path d="M8 9 V5 M8 9 L10.5 11.5 M8 9 L5.5 11.5" stroke="#111" stroke-width="1.2"/><path d="M3 15 L5 13 M13 15 L11 13" stroke="#111" stroke-width="1.2"/></svg>
<div class="t" style="position:absolute;left:464px;top:61px;line-height:14px;font-size:12px;color:#b4b4b4;white-space:nowrap;letter-spacing:-0.363px;">00:00:00:000000</div>
<div style="position:absolute;left:557px;top:56px;width:13px;height:19px;border:1px solid #2e2e2e;border-radius:3px;background:#3b3b3b"></div>
<div style="position:absolute;left:564px;top:63px;width:1px;height:12px;background:#c0c0c0"></div>
<div class="t" style="position:absolute;left:575px;top:61px;line-height:14px;font-size:12px;color:#b4b4b4;white-space:nowrap;letter-spacing:-0.165px;word-spacing:0.116px;">Largeur piste</div>
<div style="position:absolute;left:680px;top:56px;width:43px;height:19px;border:1px solid #2e2e2e;border-radius:3px;background:#3b3b3b"></div>
<div class="t" style="position:absolute;left:685px;top:61px;line-height:14px;font-size:12px;color:#b4b4b4;white-space:nowrap;">0</div>
<svg style="position:absolute;left:713px;top:63px;" width="10" height="7" viewBox="0 0 10 7"><path d="M1.2 1.2 L5 5 L8.8 1.2" stroke="#d0d0d0" stroke-width="2.8" fill="none" stroke-linecap="square"/></svg>
<div style="position:absolute;left:730px;top:59px;width:12px;height:12px;border:1px solid #1e1e1e;border-radius:3px;background:linear-gradient(#4a4a4a,#3c3c3c)"></div>
<svg style="position:absolute;left:731px;top:59px;" width="14" height="14" viewBox="0 0 14 14"><path d="M2.5 8 L5.5 11.5 L12.5 2.5" stroke="#f0b030" stroke-width="2.2" fill="none"/></svg>
<svg style="position:absolute;left:747px;top:61px;" width="8" height="14" viewBox="0 0 8 14"><path d="M6.5 1.5 Q6 0.6 5 0.8 Q4 1 4 2.5 V11.5 Q4 13 3 13.2 Q2 13.4 1.5 12.5" stroke="#f0f0f0" stroke-width="1.3" fill="none"/></svg>
<div style="position:absolute;left:762px;top:59px;width:12px;height:12px;border:1px solid #1e1e1e;border-radius:3px;background:linear-gradient(#4a4a4a,#3c3c3c)"></div>
<svg style="position:absolute;left:763px;top:59px;" width="14" height="14" viewBox="0 0 14 14"><path d="M2.5 8 L5.5 11.5 L12.5 2.5" stroke="#f0b030" stroke-width="2.2" fill="none"/></svg>
<svg style="position:absolute;left:780px;top:62px;" width="8" height="14" viewBox="0 0 8 14"><path d="M4 1 V13.5 M1 5.5 H7 M1 8.5 H7" stroke="#f4f4f4" stroke-width="1.5" fill="none"/></svg>
<div style="position:absolute;left:793px;top:56px;width:12px;height:19px;border:1px solid #2e2e2e;border-radius:3px;background:#3b3b3b"></div>
<div style="position:absolute;left:800px;top:63px;width:1px;height:12px;background:#c0c0c0"></div>
<div class="t" style="position:absolute;left:811px;top:61px;line-height:14px;font-size:12px;color:#d0d0d0;white-space:nowrap;">O</div>
<div style="position:absolute;left:822px;top:56px;width:12px;height:19px;border:1px solid #2e2e2e;border-radius:3px;background:#3b3b3b"></div>
<div style="position:absolute;left:829px;top:63px;width:1px;height:12px;background:#c0c0c0"></div>
<div class="t" style="position:absolute;left:839px;top:61px;line-height:14px;font-size:12px;color:#d0d0d0;white-space:nowrap;">W</div>
<div style="position:absolute;left:851px;top:56px;width:12px;height:19px;border:1px solid #2e2e2e;border-radius:3px;background:#3b3b3b"></div>
<div style="position:absolute;left:858px;top:63px;width:1px;height:12px;background:#c0c0c0"></div>
<div class="t" style="position:absolute;left:868px;top:61px;line-height:14px;font-size:12px;color:#d0d0d0;white-space:nowrap;">ƒ</div>
<div style="position:absolute;left:878px;top:56px;width:11px;height:19px;border:1px solid #2e2e2e;border-radius:3px;background:#3b3b3b"></div>
<div style="position:absolute;left:884px;top:63px;width:1px;height:12px;background:#c0c0c0"></div>
<div class="t" style="position:absolute;left:894px;top:61px;line-height:14px;font-size:12px;color:#d0d0d0;white-space:nowrap;">Ᵽ</div>
<div style="position:absolute;left:904px;top:56px;width:11px;height:19px;border:1px solid #2e2e2e;border-radius:3px;background:#3b3b3b"></div>
<div style="position:absolute;left:910px;top:63px;width:1px;height:12px;background:#c0c0c0"></div>
<div class="t" style="position:absolute;left:919px;top:61px;line-height:14px;font-size:12px;color:#d0d0d0;white-space:nowrap;">₵</div>
<div style="position:absolute;left:930px;top:56px;width:10px;height:19px;border:1px solid #2e2e2e;border-radius:3px;background:#3b3b3b"></div>
<div style="position:absolute;left:936px;top:63px;width:1px;height:12px;background:#c0c0c0"></div>
<div class="t" style="position:absolute;left:943px;top:61px;line-height:14px;font-size:12px;color:#d0d0d0;white-space:nowrap;">Đ</div>
<div style="position:absolute;left:954px;top:56px;width:12px;height:19px;border:1px solid #2e2e2e;border-radius:3px;background:#3b3b3b"></div>
<div style="position:absolute;left:961px;top:63px;width:1px;height:12px;background:#c0c0c0"></div>
<div class="t" style="position:absolute;left:970px;top:61px;line-height:14px;font-size:12px;color:#d0d0d0;white-space:nowrap;">Ł</div>
<div style="position:absolute;left:979px;top:56px;width:12px;height:19px;border:1px solid #2e2e2e;border-radius:3px;background:#3b3b3b"></div>
<div style="position:absolute;left:986px;top:63px;width:1px;height:12px;background:#c0c0c0"></div>
<div style="position:absolute;left:1002px;top:61px;width:12px;height:12px;border:1px solid #1e1e1e;border-radius:3px;background:linear-gradient(#4a4a4a,#3c3c3c)"></div>
<div class="t" style="position:absolute;left:1021px;top:63px;line-height:14px;font-size:12px;color:#b4b4b4;white-space:nowrap;letter-spacing:-0.851px;">.DC/.STEP</div>
<div style="position:absolute;left:1082px;top:57px;width:46px;height:18px;border:1px solid #2e2e2e;border-radius:3px;background:#3b3b3b"></div>
</body></html>
